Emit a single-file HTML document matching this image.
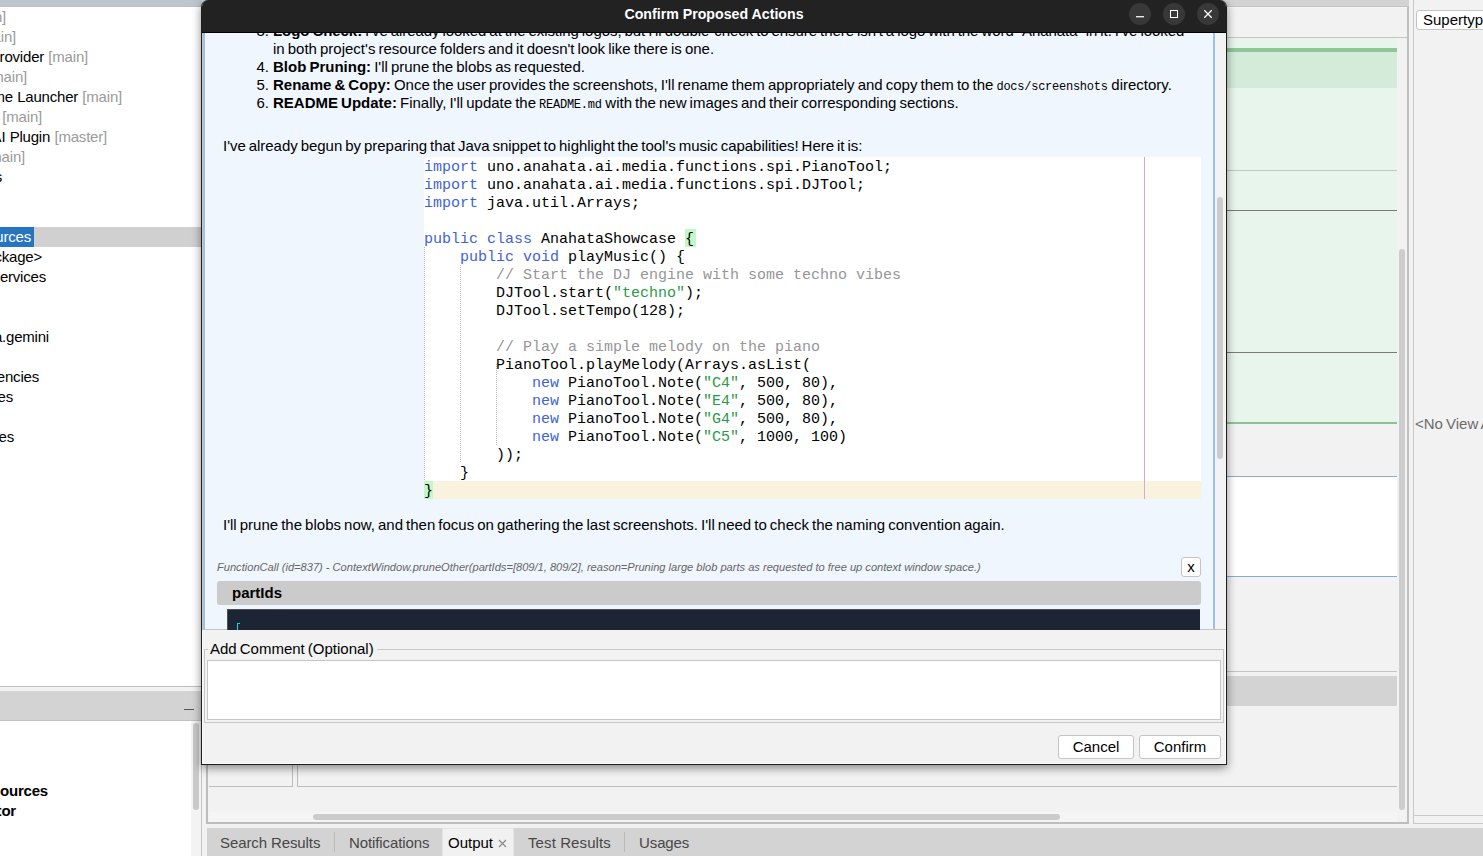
<!DOCTYPE html>
<html><head><meta charset="utf-8">
<style>
*{box-sizing:border-box;margin:0;padding:0}
html,body{width:1483px;height:856px;overflow:hidden;background:#f2f2f2;font-family:"Liberation Sans",sans-serif;font-size:15px;word-spacing:-1.1px;color:#000}
.a{position:absolute}
.nw{white-space:nowrap}
.tr{position:absolute;white-space:nowrap;line-height:20px;height:20px;letter-spacing:-0.2px;word-spacing:0.3px}
.g{color:#9a9a9a}
.code{font-family:"Liberation Mono",monospace;font-size:15px;line-height:18px;white-space:pre;word-spacing:0}
.kw{color:#3f63d6}
.cm{color:#969696}
.st{color:#2a9a48}
.mono{font-family:"Liberation Mono",monospace;font-size:12px;letter-spacing:-0.25px;margin-right:0.6px}
.guide{width:1px;background-image:linear-gradient(#b8b8b8 50%,transparent 50%);background-size:1px 2px}
</style></head><body>

<!-- ===== left tree panel ===== -->
<div class="a" style="left:0;top:0;width:202px;height:6px;background:#bdc6cf"></div>
<div class="a" style="left:0;top:6px;width:202px;height:1px;background:#bfbfbf"></div>
<div class="a" style="left:0;top:7px;width:201px;height:679px;background:#fff"></div>
<div class="a" style="left:0;top:686px;width:201px;height:1px;background:#bdbdbd"></div>
<div class="a" style="left:0;top:691px;width:201px;height:30px;background:#d3d3d3;border-bottom:1px solid #c2c2c2"></div>
<div class="a" style="left:184px;top:709px;width:10px;height:1px;background:#555"></div>
<div class="a" style="left:0;top:721px;width:201px;height:135px;background:#fff"></div>
<div class="a" style="left:191px;top:721px;width:10px;height:135px;background:#f3f3f3"></div>
<div class="a" style="left:193px;top:723px;width:6px;height:87px;background:#c9c9c9;border-radius:3px"></div>

<div id="tree">
<div class="tr g" style="right:1477px;top:7px">[main]</div>
<div class="tr g" style="right:1467px;top:27px">[main]</div>
<div class="tr" style="right:1395px;top:47px">Content Provider <span class="g">[main]</span></div>
<div class="tr g" style="right:1456px;top:67px">[main]</div>
<div class="tr" style="right:1361px;top:87px">Game Launcher <span class="g">[main]</span></div>
<div class="tr g" style="right:1441px;top:107px">x [main]</div>
<div class="tr" style="right:1376px;top:127px">Gemini AI Plugin <span class="g">[master]</span></div>
<div class="tr g" style="right:1458px;top:147px">[main]</div>
<div class="tr" style="right:1481px;top:167px">Libraries</div>
<div class="a" style="left:0;top:227px;width:201px;height:20px;background:#d0d0d0"></div>
<div class="a" style="left:0;top:227px;width:34px;height:20px;background:#2675bf"></div>
<div class="tr" style="right:1452px;top:227px;color:#fff">Other Sources</div>
<div class="tr" style="right:1441px;top:247px">&lt;default package&gt;</div>
<div class="tr" style="right:1437px;top:267px">META-INF/services</div>
<div class="tr" style="right:1434px;top:327px">uno.anahata.gemini</div>
<div class="tr" style="right:1444px;top:367px">Dependencies</div>
<div class="tr" style="right:1470px;top:387px">Files</div>
<div class="tr" style="right:1469px;top:427px">Files</div>
<div class="tr" style="right:1435px;top:781px;font-weight:bold">Other Sources</div>
<div class="tr" style="right:1467px;top:801px;font-weight:bold">Navigator</div>
</div>

<!-- ===== center/right IDE background ===== -->
<div class="a" style="left:202px;top:0;width:1207px;height:6px;background:#d3d3d3"></div>
<div class="a" style="left:202px;top:6px;width:1207px;height:1px;background:#c2c2c2"></div>
<div class="a" style="left:202px;top:7px;width:1205px;height:1px;background:#f6f6f6"></div>
<div class="a" style="left:202px;top:37px;width:1206px;height:1px;background:#c4c4c4"></div>
<div class="a" style="left:1407px;top:7px;width:2px;height:816px;background:#bfbfbf"></div>
<div class="a" style="left:202px;top:38px;width:1195px;height:10px;background:#e8f5ec"></div>
<div class="a" style="left:202px;top:48px;width:1195px;height:4px;background:#8fc796"></div>
<div class="a" style="left:202px;top:52px;width:1195px;height:36px;background:#d4ebda"></div>
<div class="a" style="left:202px;top:88px;width:1195px;height:335px;background:#e8f5ec"></div>
<div class="a" style="left:202px;top:170px;width:1195px;height:1px;background:#c6c6c6"></div>
<div class="a" style="left:202px;top:210px;width:1195px;height:1px;background:#7a7a7a"></div>
<div class="a" style="left:202px;top:352px;width:1195px;height:1px;background:#7a7a7a"></div>
<div class="a" style="left:202px;top:422px;width:1195px;height:2px;background:#8cc394"></div>
<div class="a" style="left:202px;top:476px;width:1195px;height:1px;background:#8caad0"></div>
<div class="a" style="left:202px;top:477px;width:1195px;height:99px;background:#fff"></div>
<div class="a" style="left:202px;top:576px;width:1195px;height:1px;background:#8caad0"></div>
<div class="a" style="left:202px;top:671px;width:1195px;height:1px;background:#c4c4c4"></div>
<div class="a" style="left:202px;top:676px;width:1195px;height:30px;background:#d3d3d3"></div>
<div class="a" style="left:1399px;top:249px;width:6px;height:561px;background:#cdcdcd;border-radius:3px"></div>
<!-- output panel lower -->
<div class="a" style="left:201px;top:764px;width:1px;height:92px;background:#c4c4c4"></div>
<div class="a" style="left:206px;top:700px;width:2px;height:124px;background:#bdbdbd"></div>
<div class="a" style="left:207px;top:822px;width:1202px;height:2px;background:#bdbdbd"></div>
<div class="a" style="left:209px;top:812px;width:1188px;height:10px;background:#f5f5f5"></div>
<div class="a" style="left:313px;top:814px;width:747px;height:6px;background:#cbcbcb;border-radius:3px"></div>
<div class="a" style="left:209px;top:700px;width:84px;height:87px;border-right:1px solid #bdbdbd;border-bottom:1px solid #bdbdbd"></div>
<div class="a" style="left:297px;top:700px;width:1100px;height:87px;border-left:1px solid #bdbdbd;border-bottom:1px solid #bdbdbd"></div>

<!-- right panel -->
<div class="a" style="left:1413px;top:0;width:1px;height:824px;background:#c8c8c8"></div>
<div class="a" style="left:1414px;top:815px;width:69px;height:1px;background:#c8c8c8"></div>
<div class="a" style="left:1414px;top:823px;width:69px;height:1px;background:#c8c8c8"></div>
<div class="a" style="left:1416px;top:10px;width:80px;height:20px;background:#fff;border:1px solid #c4c4c4;border-radius:3px"></div>
<div class="a nw" style="left:1423px;top:9.5px;line-height:19px">Supertype</div>
<div class="a nw" style="left:1415px;top:414px;color:#6b6b6b;line-height:20px">&lt;No View Available&gt;</div>

<!-- bottom tab bar -->
<div class="a" style="left:207px;top:828px;width:1276px;height:28px;background:#d3d3d3"></div>
<div class="a nw" style="left:220px;top:834px;color:#474747;word-spacing:0;letter-spacing:-0.1px">Search Results</div>
<div class="a" style="left:334px;top:832px;width:1px;height:20px;background:#bababa"></div>
<div class="a nw" style="left:349px;top:834px;color:#474747;word-spacing:0;letter-spacing:-0.1px">Notifications</div>
<div class="a" style="left:442px;top:828px;width:72px;height:28px;background:#f1f1f1;border:1px solid #e4e4e4;border-bottom:0"></div>
<div class="a nw" style="left:448px;top:834px;color:#000">Output</div>
<svg class="a" style="left:498px;top:839px" width="9" height="9"><path d="M1 1L8 8M8 1L1 8" stroke="#8a8a8a" stroke-width="1.2"/></svg>
<div class="a nw" style="left:528px;top:834px;color:#474747;word-spacing:0;letter-spacing:0.1px">Test Results</div>
<div class="a" style="left:624px;top:832px;width:1px;height:20px;background:#bababa"></div>
<div class="a nw" style="left:639px;top:834px;color:#474747;word-spacing:0;letter-spacing:-0.1px">Usages</div>

<!-- ===== dialog ===== -->
<div id="dlg" class="a" style="left:201px;top:0;width:1026px;height:765px;border:1px solid #1e1e1e;border-top:0;border-radius:7px 7px 0 0;box-shadow:0 3px 10px rgba(0,0,0,0.45);background:#f2f2f2;overflow:hidden">
  <div class="a" style="left:0;top:0;width:1024px;height:32px;background:#222"></div>
  <div class="a" style="left:0;top:32px;width:1024px;height:1px;background:#000"></div>
  <div class="a nw" style="left:0;top:6px;width:1024px;text-align:center;color:#fff;font-weight:bold;font-size:14.2px;word-spacing:0;line-height:18px;margin-top:-1px">Confirm Proposed Actions</div>
  <div class="a" style="left:927px;top:3px;width:22px;height:22px;border-radius:50%;background:#383838"></div>
  <svg class="a" style="left:934px;top:14px" width="8" height="4"><rect x="0" y="2.1" width="8" height="1.25" fill="#fff"/></svg>
  <div class="a" style="left:961px;top:3px;width:22px;height:22px;border-radius:50%;background:#383838"></div>
  <div class="a" style="left:968px;top:10px;width:8px;height:8px;border:1.4px solid #fff"></div>
  <div class="a" style="left:995px;top:3px;width:22px;height:22px;border-radius:50%;background:#383838"></div>
  <svg class="a" style="left:995px;top:3px" width="22" height="22"><path d="M7.3 7.3L14.7 14.7M14.7 7.3L7.3 14.7" stroke="#fff" stroke-width="1.25"/></svg>
  <div id="content" class="a" style="left:0;top:33px;width:1024px;height:597px;background:#eff6fe;overflow:hidden">
    <div class="a" style="left:0;top:0;width:1px;height:597px;background:#c8c8c8"></div>
    <div class="a" style="left:0;top:596px;width:1024px;height:1px;background:#c4c4c4"></div>
    <div class="a" style="left:1023px;top:0;width:1px;height:596px;background:#f9f9f9"></div>
    <div class="a" style="left:1px;top:0;width:2px;height:596px;background:#9cc0e8"></div>
    <div class="a" style="left:1011px;top:0;width:2px;height:596px;background:#9cc0e8"></div>
    <div class="a" style="left:1013px;top:0;width:11px;height:596px;background:#f3f3f3"></div>
    <div class="a" style="left:1015px;top:164px;width:6px;height:262px;background:#cccccc;border-radius:3px"></div>
    <div id="list" style="position:absolute;left:0;top:-11px;line-height:18px">
      <div class="nw" style="position:relative;height:18px"><span class="a" style="left:0;width:67px;text-align:right">3.</span><span class="a" style="left:71px;letter-spacing:-0.06px"><b>Logo Check:</b> I've already looked at the existing logos, but I'll double-check to ensure there isn't a logo with the word "Anahata" in it. I've looked</span></div>
      <div class="nw" style="position:relative;height:18px"><span class="a" style="left:71px">in both project's resource folders and it doesn't look like there is one.</span></div>
      <div class="nw" style="position:relative;height:18px"><span class="a" style="left:0;width:67px;text-align:right">4.</span><span class="a" style="left:71px"><b>Blob Pruning:</b> I'll prune the blobs as requested.</span></div>
      <div class="nw" style="position:relative;height:18px"><span class="a" style="left:0;width:67px;text-align:right">5.</span><span class="a" style="left:71px"><b>Rename &amp; Copy:</b> Once the user provides the screenshots, I'll rename them appropriately and copy them to the <span class="mono">docs/screenshots</span> directory.</span></div>
      <div class="nw" style="position:relative;height:18px"><span class="a" style="left:0;width:67px;text-align:right">6.</span><span class="a" style="left:71px"><b>README Update:</b> Finally, I'll update the <span class="mono">README.md</span> with the new images and their corresponding sections.</span></div>
    </div>
    <div class="a nw" style="left:21px;top:104px;line-height:18px;letter-spacing:-0.04px">I've already begun by preparing that Java snippet to highlight the tool's music capabilities! Here it is:</div>
    <div id="codebox" class="a" style="left:222px;top:124px;width:777px;height:342px;background:#fff;overflow:hidden">
      <div class="a" style="left:0;top:324px;width:777px;height:18px;background:#f8f2df"></div>
      <div class="a" style="left:0;top:324px;width:9px;height:18px;background:#c4f7c6"></div>
      <div class="a" style="left:261px;top:72px;width:11px;height:18px;background:#c4f7c6"></div>
      <div class="a" style="left:720px;top:0;width:1px;height:342px;background:#d6acce"></div>
      <div class="a guide" style="left:0;top:90px;height:234px"></div>
      <div class="a guide" style="left:36px;top:108px;height:198px"></div>
      <div class="a guide" style="left:72px;top:207px;height:81px"></div>
      <div class="a code" style="left:0;top:2px"><span class="kw">import</span> uno.anahata.ai.media.functions.spi.PianoTool;
<span class="kw">import</span> uno.anahata.ai.media.functions.spi.DJTool;
<span class="kw">import</span> java.util.Arrays;

<span class="kw">public class</span> AnahataShowcase {
    <span class="kw">public void</span> playMusic() {
        <span class="cm">// Start the DJ engine with some techno vibes</span>
        DJTool.start(<span class="st">"techno"</span>);
        DJTool.setTempo(128);

        <span class="cm">// Play a simple melody on the piano</span>
        PianoTool.playMelody(Arrays.asList(
            <span class="kw">new</span> PianoTool.Note(<span class="st">"C4"</span>, 500, 80),
            <span class="kw">new</span> PianoTool.Note(<span class="st">"E4"</span>, 500, 80),
            <span class="kw">new</span> PianoTool.Note(<span class="st">"G4"</span>, 500, 80),
            <span class="kw">new</span> PianoTool.Note(<span class="st">"C5"</span>, 1000, 100)
        ));
    }
}</div>
    </div>
    <div class="a nw" style="left:21px;top:483px;line-height:18px">I'll prune the blobs now, and then focus on gathering the last screenshots. I'll need to check the naming convention again.</div>
    <div class="a nw" style="left:15px;top:527px;line-height:14px;font-size:11.1px;word-spacing:0;font-style:italic;color:#666">FunctionCall (id=837) - ContextWindow.pruneOther(partIds=[809/1, 809/2], reason=Pruning large blob parts as requested to free up context window space.)</div>
    <div class="a" style="left:979px;top:524px;width:20px;height:20px;background:#fff;border:1px solid #c4c4c4;border-radius:3px;text-align:center;line-height:17px">x</div>
    <div class="a" style="left:15px;top:548px;width:984px;height:24px;background:#cbcbcb;border-radius:3px"></div>
    <div class="a nw" style="left:30px;top:551px;line-height:18px;font-weight:bold">partIds</div>
    <div class="a" style="left:25px;top:576px;width:973px;height:40px;background:#1d2433;border-top:1px solid #4e5058;border-left:1px solid #4e5058"></div>
    <div class="a" style="left:35px;top:590px;width:3px;height:8px;border-left:1.5px solid #00dcf8;border-top:1.5px solid #00dcf8"></div>

  </div>
  <div class="a" style="left:2px;top:649px;width:1020px;height:74px;border:1px solid #c8c8c8"></div>
  <div class="a nw" style="left:6px;top:640px;padding:0 3px 0 2px;background:#f2f2f2;line-height:18px">Add Comment (Optional)</div>
  <div class="a" style="left:5px;top:660px;width:1014px;height:60px;background:#fff;border:1px solid #c6c6c6"></div>
  <div class="a" style="left:856px;top:735px;width:76px;height:24px;background:#fff;border:1px solid #c4c4c4;border-radius:3px;text-align:center;line-height:22px">Cancel</div>
  <div class="a" style="left:937px;top:735px;width:82px;height:24px;background:#fff;border:1px solid #c4c4c4;border-radius:3px;text-align:center;line-height:22px">Confirm</div>
  <div class="a" style="left:0;top:763px;width:1024px;height:1px;background:#fafafa"></div>
  <div class="a" style="left:0;top:630px;width:1px;height:133px;background:#fafafa"></div>
  <div class="a" style="left:1023px;top:630px;width:1px;height:133px;background:#fafafa"></div>

</div>
</body></html>
